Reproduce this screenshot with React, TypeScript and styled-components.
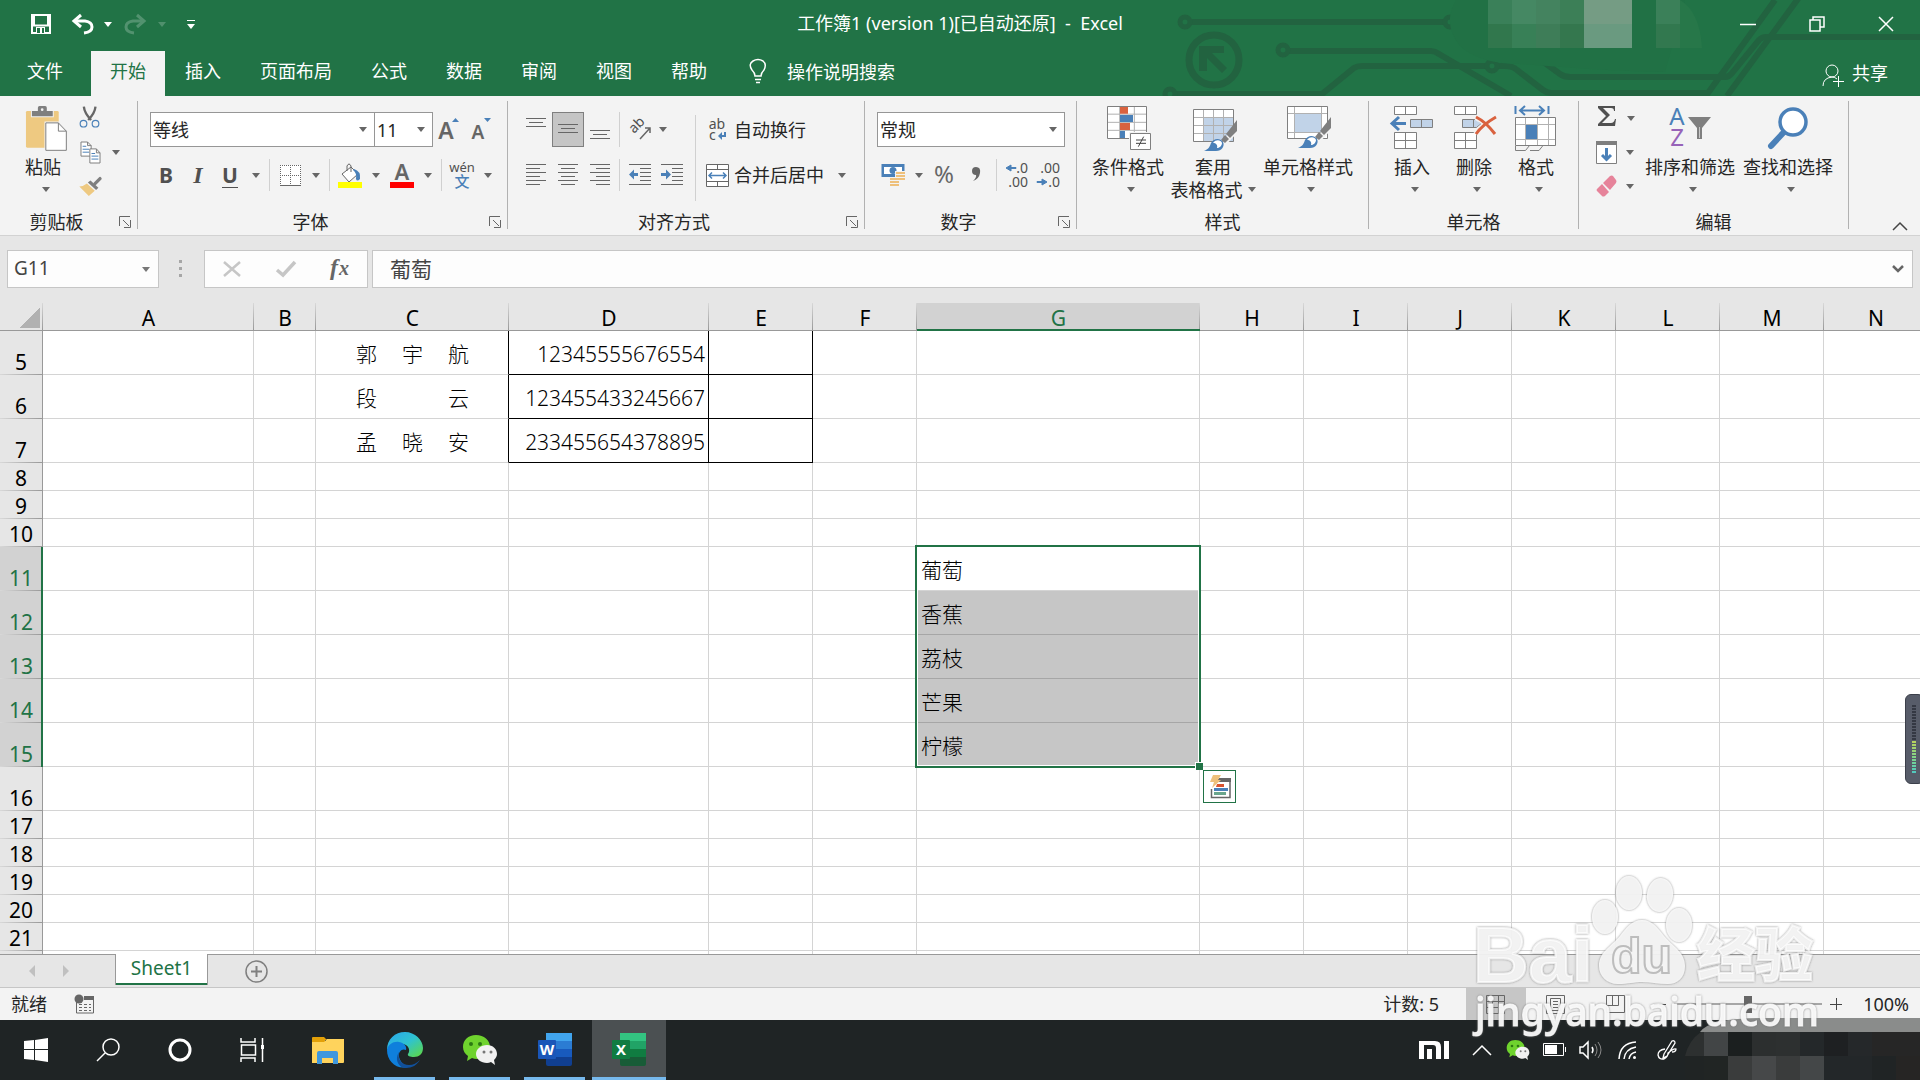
import React from 'react';
import styled, { createGlobalStyle, css } from 'styled-components';

const GREEN = '#217346';
const INK = '#262626';
const GRAY = '#666666';
const BLUE = '#4a80b8';
const UI_FONT = '"Noto Sans", "Noto Sans CJK SC", sans-serif';

const GlobalStyle = createGlobalStyle`
  *, *::before, *::after { box-sizing: border-box; }
  body { margin: 0; overflow: hidden; }
  button, input, select {
    font: inherit;
    color: inherit;
    border: 0;
    padding: 0;
    margin: 0;
    background: none;
    border-radius: 0;
    outline: none;
  }
  svg { display: block; flex: none; overflow: visible; }
`;

/* ---------- shell ---------- */

const Shell = styled.div`
  display: flex;
  flex-direction: column;
  position: relative;
  height: 100vh;
  overflow: hidden;
  font-family: ${UI_FONT};
  font-size: 18px;
  line-height: 22px;
  color: ${INK};
  background: #e6e6e6;
`;

const TopArea = styled.header`
  position: relative;
  flex: none;
  background: ${GREEN};
  color: #fff;
`;

const Circuit = styled.svg`
  position: absolute;
  top: 0;
  right: 0;
  overflow: hidden;
`;

const TitleBar = styled.div`
  position: relative;
  display: grid;
  grid-template-columns: 1fr auto 1fr;
  height: 51px;
`;

const QuickAccess = styled.div`
  display: flex;
  align-items: center;
  padding-left: 20px;
  height: 48px;
`;

const Title = styled.h1`
  margin: 0;
  font-size: 18px;
  font-weight: 400;
  line-height: 47px;
  white-space: pre;
`;

const WindowButtons = styled.div`
  display: flex;
  justify-content: flex-end;
  height: 48px;
`;

const PlainButton = styled.button<{ $w: number; $dim?: boolean }>`
  display: flex;
  align-items: center;
  justify-content: center;
  flex: none;
  width: ${(p) => p.$w}px;
  opacity: ${(p) => (p.$dim ? 0.22 : 1)};
`;

const TabRow = styled.nav`
  position: relative;
  display: flex;
  gap: 1px;
  height: 45px;
`;

const Tab = styled.button<{ $active?: boolean; $wide?: boolean }>`
  height: 45px;
  padding: 0 ${(p) => (p.$wide ? 27 : 19)}px;
  padding-bottom: 5px;
  line-height: 40px;
  ${(p) =>
    p.$active &&
    css`
      background: #f3f3f3;
      color: ${GREEN};
    `}
`;

const TellMe = styled.button`
  display: flex;
  align-items: center;
  gap: 20px;
  height: 45px;
  margin-left: 22px;
  padding-bottom: 4px;
`;

const Share = styled.button`
  display: flex;
  align-items: center;
  gap: 8px;
  height: 45px;
  margin-left: auto;
  padding: 0 32px 2px 0;
`;

/* ---------- ribbon ---------- */

const Ribbon = styled.div`
  display: flex;
  flex: none;
  height: 140px;
  background: #f3f3f3;
  border-bottom: 1px solid #d2d2d2;
`;

const GroupBox = styled.section<{ $w: number }>`
  display: flex;
  flex-direction: column;
  flex: none;
  width: ${(p) => p.$w}px;
  margin-top: 5px;
  padding-right: 1px;
  background: linear-gradient(#b1b1b1, #b1b1b1) right top / 1px 128px no-repeat;
`;

const GroupBody = styled.div`
  display: flex;
  height: 110px;
  padding-left: 12px;
`;

const GroupFoot = styled.div`
  display: flex;
  align-items: center;
  text-align: center;
  height: 22px;
`;

const GroupName = styled.span`
  flex: 1;
`;

const Lines = styled.div`
  display: flex;
  flex-direction: column;
  gap: 12px;
  padding-top: 11px;
`;

const ToolRow = styled.div<{ $tall?: boolean }>`
  display: flex;
  align-items: stretch;
  height: ${(p) => (p.$tall ? 35 : 32)}px;
`;

const Tool = styled.button<{ $w?: number; $on?: boolean }>`
  display: flex;
  align-items: center;
  justify-content: center;
  flex: none;
  width: ${(p) => p.$w ?? 32}px;
  color: #505050;
  ${(p) =>
    p.$on &&
    css`
      background: #c5c5c5;
      box-shadow: inset 0 0 0 1px #7f7f7f;
    `}
`;

const LabelTool = styled.button`
  display: flex;
  align-items: center;
  height: 100%;
  gap: 5px;
  padding-left: 2px;
`;

const Rule = styled.i<{ $w?: number }>`
  flex: none;
  width: 1px;
  margin: 0 ${(p) => p.$w ?? 4}px 0 ${(p) => (p.$w ?? 4) - 1}px;
  background: #d0d0d0;
`;

const TallRule = styled(Rule)`
  margin-top: 14px;
  margin-bottom: 10px;
`;

const Letter = styled.span<{ $kind: 'bold' | 'italic' | 'under' }>`
  font-size: 21px;
  font-weight: 700;
  line-height: 24px;
  ${(p) => p.$kind === 'italic' && 'font-family: "Liberation Serif", serif; font-style: italic; font-size: 24px;'}
  ${(p) => p.$kind === 'under' && 'border-bottom: 1px solid #505050;'}
`;

const Combo = styled.label<{ $w: number; $join?: boolean }>`
  display: flex;
  align-items: center;
  flex: none;
  width: ${(p) => p.$w}px;
  height: 35px;
  padding: 0 7px 0 2px;
  border: 1px solid #969696;
  border-left-width: ${(p) => (p.$join ? 0 : 1)}px;
  background: #fff;
`;

const Select = styled.select`
  appearance: none;
  flex: 1;
  min-width: 0;
  height: 100%;
`;

const Big = styled.button<{ $w: number }>`
  display: flex;
  flex-direction: column;
  align-items: center;
  flex: none;
  width: ${(p) => p.$w}px;
  padding-top: 5px;
  white-space: nowrap;
`;

const BigIcon = styled.span`
  display: flex;
  height: 49px;
`;

const BigLine = styled.span<{ $lone?: boolean }>`
  display: flex;
  align-items: center;
  gap: 5px;
  height: 23px;
  padding-left: ${(p) => (p.$lone ? 5 : 0)}px;
`;

const SmallStack = styled.div<{ $w: number }>`
  display: flex;
  flex-direction: column;
  flex: none;
  width: ${(p) => p.$w}px;
`;

const StackRow = styled.div`
  display: flex;
  height: 34px;
`;

const Collapse = styled.button`
  align-self: flex-end;
  margin: 0 12px 4px auto;
`;

/* ---------- formula bar ---------- */

const FormulaBar = styled.div`
  display: flex;
  align-items: center;
  flex: none;
  height: 67px;
  padding: 0 7px 1px;
`;

const Field = styled.label<{ $grow?: boolean }>`
  display: flex;
  align-items: center;
  height: 38px;
  padding: 0 8px 0 6px;
  border: 1px solid #c6c6c6;
  background: #fdfdfd;
  color: #444;
  ${(p) =>
    p.$grow ? 'flex: 1; margin-left: 4px; padding-left: 17px; font-size: 21px;' : 'flex: none; width: 152px; font-size: 19px;'}
`;

const TextInput = styled.input`
  flex: 1;
  min-width: 0;
  height: 100%;
  padding-bottom: 2px;
`;

const FormulaTools = styled.div`
  display: flex;
  flex: none;
  width: 164px;
  height: 38px;
  border: 1px solid #c6c6c6;
  background: #fdfdfd;
`;

const Grip = styled.svg`
  margin: 0 22px 0 20px;
`;

/* ---------- grid ---------- */

const SheetArea = styled.main`
  position: relative;
  flex: 1;
  min-height: 0;
  overflow: hidden;
  background: #fff;
`;

const Grid = styled.table`
  table-layout: fixed;
  width: 1928px;
  border-collapse: separate;
  border-spacing: 0;
  font-size: 21px;
  font-weight: 300;
  line-height: 24px;
  color: #000;
`;

const ColHead = styled.th<{ $on?: boolean }>`
  height: 28px;
  padding: 2px 0 0;
  font-weight: 400;
  line-height: 22px;
  border-bottom: 1px solid #999;
  background: linear-gradient(#d8d8d8, #999) right / 1px 100% no-repeat #e6e6e6;
  ${(p) =>
    p.$on &&
    css`
      color: ${GREEN};
      background-color: #d2d2d2;
      border-bottom-color: ${GREEN};
      box-shadow: inset 0 -1px ${GREEN};
    `}
`;

const Corner = styled(ColHead)`
  background-image: linear-gradient(to bottom right, transparent 50%, #b1b1b1 50%), linear-gradient(#d8d8d8, #999);
  background-position: 20px 5px, right;
  background-size: 20px 20px, 1px 100%;
`;

const RowHead = styled.th<{ $on?: boolean }>`
  padding: 0 0 1px;
  font-weight: 400;
  vertical-align: bottom;
  border-right: 1px solid #999;
  background: linear-gradient(to right, #d8d8d8, #999) bottom / 100% 1px no-repeat #e6e6e6;
  ${(p) =>
    p.$on &&
    css`
      color: ${GREEN};
      background-color: #d2d2d2;
      border-right-color: ${GREEN};
      box-shadow: inset -1px 0 ${GREEN};
    `}
`;

const Row = styled.tr<{ $h: number }>`
  height: ${(p) => p.$h}px;
`;

const Cell = styled.td<{ $box?: boolean; $edge?: boolean; $fill?: boolean; $anchor?: boolean }>`
  padding: 2px 3px 0 4px;
  border-right: 1px solid ${(p) => (p.$box || p.$edge ? '#000' : '#d4d4d4')};
  border-bottom: 1px solid ${(p) => (p.$box ? '#000' : p.$fill ? '#a6a6a6' : '#d4d4d4')};
  text-align: ${(p) => (p.$box ? 'right' : 'left')};
  background: ${(p) => (p.$fill ? '#c6c6c6' : 'transparent')};
  white-space: nowrap;
  ${(p) => p.$anchor && 'position: relative;'}
`;

const Spread = styled.span`
  display: flex;
  justify-content: space-between;
  padding: 0 36px;
`;

const Outline = styled.div<{ $rows: number }>`
  position: absolute;
  z-index: 2;
  top: -2px;
  left: -2px;
  right: -2px;
  height: ${(p) => p.$rows * 44 + 3}px;
  border: 2px solid ${GREEN};
  box-shadow: inset 0 0 0 1px #fff;
  pointer-events: none;

  &::after {
    content: '';
    position: absolute;
    right: -4px;
    bottom: -4px;
    width: 8px;
    height: 8px;
    background: ${GREEN};
    border: 1px solid #fff;
    border-width: 1px 0 0 1px;
  }
`;

const QuickAnalysis = styled.button`
  position: absolute;
  z-index: 3;
  top: 223px;
  left: 286px;
  display: flex;
  align-items: center;
  justify-content: center;
  width: 33px;
  height: 33px;
  border: 1px solid ${GREEN};
  background: #fff;
`;

const Meter = styled.div`
  position: absolute;
  right: -4px;
  top: 391px;
  width: 19px;
  height: 90px;
  padding: 10px 7px 10px 6px;
  border: 1px solid #3b3f4a;
  border-radius: 6px;
  background: #575c69;
`;

const MeterScale = styled.div`
  height: 100%;
  background: repeating-linear-gradient(to bottom, transparent 0 2px, #575c69 2px 3px),
    linear-gradient(to bottom, #343843 0 52%, #bcd25a 52%, #7fd58a 78%, #4fc9c0 100%);
`;

/* ---------- sheet tabs and status bar ---------- */

const SheetTabs = styled.div`
  display: flex;
  flex: none;
  height: 34px;
  border-top: 1px solid #999;
  border-bottom: 1px solid #c6c6c6;
`;

const SheetNav = styled.div`
  display: flex;
  align-items: center;
  width: 115px;
  padding-left: 15px;
`;

const SheetTab = styled.button`
  height: 31px;
  width: 93px;
  margin-top: -1px;
  padding-bottom: 3px;
  font-size: 19px;
  color: ${GREEN};
  background: #fff;
  border: 1px solid #999;
  border-width: 0 1px;
  box-shadow: inset 0 -2px ${GREEN};
`;

const StatusBar = styled.footer`
  display: flex;
  align-items: center;
  flex: none;
  height: 32px;
  padding: 0 11px;
  background: #f3f3f3;
`;

const Count = styled.span`
  margin: 0 27px 0 auto;
`;

const ViewButton = styled.button<{ $on?: boolean }>`
  display: flex;
  align-items: center;
  justify-content: center;
  width: 60px;
  height: 32px;
  background: ${(p) => (p.$on ? '#c6c6c6' : 'none')};
`;

const Zoom = styled.input`
  appearance: none;
  width: 148px;
  height: 18px;
  background: linear-gradient(#a6a6a6, #a6a6a6) center / 100% 2px no-repeat;

  &::-webkit-slider-thumb {
    appearance: none;
    width: 8px;
    height: 17px;
    background: #666;
  }
`;

const ZoomValue = styled.span`
  width: 50px;
  margin-left: 9px;
  text-align: right;
`;

/* ---------- taskbar ---------- */

const Taskbar = styled.div`
  display: flex;
  flex: none;
  height: 60px;
  background: #1f2425;
  color: #fff;
`;

const TaskButton = styled.button<{ $w: number; $state?: 'open' | 'active' }>`
  display: flex;
  align-items: center;
  justify-content: center;
  flex: none;
  width: ${(p) => p.$w}px;
  height: 60px;
  ${(p) => p.$state === 'open' && 'background: linear-gradient(#76b9ed, #76b9ed) bottom / 61px 3px no-repeat;'}
  ${(p) => p.$state === 'active' && 'background: #4b5052; box-shadow: inset 0 -3px #76b9ed;'}
`;

const Tray = styled.div`
  display: flex;
  align-items: center;
  margin-left: auto;
  padding-right: 232px;
`;

const Mosaic = styled.svg`
  position: absolute;
  right: 0;
  bottom: 0;
  overflow: hidden;
`;

const Watermark = styled.svg`
  position: absolute;
  right: 96px;
  bottom: 30px;
  pointer-events: none;
`;

/* ---------- drawings ---------- */

const Art = ({ w, h, box, children }: { w: number; h: number; box?: string; children: React.ReactNode }) => (
  <svg width={w} height={h} viewBox={box ?? `0 0 ${w} ${h}`} fill="none" aria-hidden="true">
    {children}
  </svg>
);

const Caret = ({ color = GRAY }: { color?: string }) => (
  <Art w={8} h={5}>
    <path d="M0 0h8L4 5z" fill={color} />
  </Art>
);

const CaretTool = ({ w = 20, label }: { w?: number; label: string }) => (
  <Tool $w={w} aria-label={label}>
    <Caret />
  </Tool>
);

const LineSet = ({ lines, h }: { lines: [number, number, number][]; h: number }) => (
  <Art w={20} h={h}>
    {lines.map(([x, y, w]) => (
      <rect key={y} x={x} y={y} width={w} height={1} fill={GRAY} />
    ))}
  </Art>
);

const vertical = (top: number): [number, number, number][] => [
  [0, top, 20],
  [3, top + 4, 14],
  [0, top + 8, 20],
];

const horizontal = (shift: number): [number, number, number][] =>
  [20, 14, 20, 14, 20, 14].map((w, i) => [((20 - w) * shift) / 2, 5 + i * 4, w]);

const IndentIcon = ({ out }: { out?: boolean }) => (
  <Art w={22} h={22}>
    <path d="M0 .5h22M11 4.5h11M11 8.5h11M11 12.5h11M11 16.5h11M0 20.5h22" stroke={GRAY} />
    <path d={out ? 'M0 10.5l5-5v3.500h4v3H5v3.500z' : 'M10 10.500l-5-5v3.500H0v3h5v3.500z'} fill={BLUE} />
  </Art>
);

const BrushOver = () => (
  <>
    <path d="M26 38l18-26v12L32 37z" fill="#f3f3f3" />
    <path d="M44 11v11l-7 7-4-4z" fill="#7f7f7f" />
    <path d="M32 26l4 4-4 4-4-3z" fill="#7f7f7f" />
    <path d="M11 42c5-2 6-5 7-8 3-5 9-5 12-1 2 4-1 9-7 9z" fill={BLUE} />
    <path d="M20 34c3-4 8-3 9 0 0 3-3 5-5 5 1-3-1-5-4-5z" fill="#fff" />
  </>
);

const PasteIcon = () => (
  <Art w={47} h={45} box="60 36 142 136">
    <rect x="78" y="51" width="99" height="111" rx="4" fill="#eec981" />
    <path d="M93 48h69v22H93z" fill="#f3f3f3" />
    <path d="M96 51h18v-10q0-5 5-5h17q5 0 5 5v10h18v16H96z" fill="#7f7f7f" />
    <circle cx="127" cy="47" r="4" fill="#f3f3f3" />
    <path d="M138 87h38l24 25v58h-62z" fill="#fff" stroke="#f3f3f3" strokeWidth="8" />
    <path d="M138 87h38l24 25v58h-62zM176 87v25h24" fill="#fff" stroke="#7f7f7f" strokeWidth="3" />
  </Art>
);

const CutIcon = () => (
  <Art w={21} h={22} box="239 37 62 66">
    <path d="M250 36q2 20 22 40M285 36q-2 20-22 40" stroke={GRAY} strokeWidth="7" />
    <circle cx="249" cy="87" r="10" stroke={BLUE} strokeWidth="3.500" />
    <circle cx="285" cy="87" r="10" stroke={BLUE} strokeWidth="3.500" />
  </Art>
);

const CopyIcon = () => (
  <Art w={21} h={23} box="238 137 64 68">
    <path d="M241 139h20l11 11v32h-31zM261 139v11h11" fill="#fff" stroke="#7f7f7f" strokeWidth="3" />
    <path d="M246 152h11M246 161h20M246 170h20" stroke={BLUE} strokeWidth="3" />
    <path d="M268 160h20l11 12v31h-31zM288 160v12h11" fill="#fff" stroke="#7f7f7f" strokeWidth="3" />
    <path d="M273 174h11M273 182h21M273 191h21" stroke={BLUE} strokeWidth="3" />
  </Art>
);

const PainterIcon = () => (
  <Art w={23} h={21} box="234 245 70 62">
    <path d="M235 276q14-1 23-9l24 22-18 16z" fill="#eec981" />
    <path d="M261 264l8-6 24 22-7 7z" fill="#7f7f7f" />
    <path d="M282 268l16-16" stroke="#7f7f7f" strokeWidth="10" strokeLinecap="round" />
  </Art>
);

const BorderIcon = () => (
  <Art w={21} h={21}>
    <rect width="21" height="21" fill="#fff" />
    <path d="M.5 0v20M20.500 0v20M10.500 0v20M0 .5h21M0 10.500h21" stroke={GRAY} strokeDasharray="1 1" />
    <path d="M0 20.500h21" stroke={GRAY} />
  </Art>
);

const BucketIcon = () => (
  <Art w={24} h={25}>
    <path d="M4 11l9-7 7 7-9 8z" fill="#fff" stroke={GRAY} />
    <path d="M9 8V3q2-4 4 0v6" stroke={GRAY} />
    <path d="M16 6q7 2 6 10-3 3-4 0 1-6-3-9z" fill={BLUE} />
    <rect y="19" width="24" height="6" fill="#ff0" />
  </Art>
);

const FontColorIcon = () => (
  <Art w={24} h={25}>
    <text x="12" y="17" textAnchor="middle" fontSize="22" fontWeight="600" fill={GRAY}>A</text>
    <rect y="19" width="24" height="6" fill="#f00" />
  </Art>
);

const PhoneticIcon = () => (
  <Art w={28} h={28}>
    <text x="14" y="11" textAnchor="middle" fontSize="13" fill="#505050">wén</text>
    <text x="14" y="26" textAnchor="middle" fontSize="15" fontWeight="500" fill={BLUE}>文</text>
  </Art>
);

const SizeIcon = ({ up }: { up?: boolean }) => (
  <Art w={24} h={26}>
    <text x="9" y="22" textAnchor="middle" fontSize={up ? 23 : 19} fontWeight="600" fill={GRAY}>A</text>
    <path d={up ? 'M15 5h7l-3.500-4z' : 'M15 1h7l-3.500 4z'} fill={BLUE} />
  </Art>
);

const OrientIcon = () => (
  <Art w={26} h={22} box="-4 0 26 22">
    <text x="3" y="15" transform="rotate(-45 3 15)" fontSize="14" fill="#505050">ab</text>
    <path d="M9 20L19 9M14 9h5v5" stroke={GRAY} strokeWidth="1.500" />
  </Art>
);

const WrapIcon = () => (
  <Art w={23} h={24}>
    <text x="11" y="11" textAnchor="middle" fontSize="14" fill="#505050">ab</text>
    <text x="3" y="22" fontSize="14" fill="#505050">c</text>
    <path d="M19 14v4h-5" stroke={BLUE} strokeWidth="2" />
    <path d="M16 14l-4 4 4 4z" fill={BLUE} />
  </Art>
);

const MergeIcon = () => (
  <Art w={23} h={23}>
    <path d="M.5.500h22v22H.500zM.500 5.500h22M.500 17.500h22M11.500.500v5M11.500 17.500v5" fill="#fff" stroke={GRAY} />
    <path d="M3 11.500h17M6 8.500l-3 3 3 3M17 8.500l3 3-3 3" stroke={BLUE} strokeWidth="1.500" />
  </Art>
);

const MoneyIcon = () => (
  <Art w={24} h={24}>
    <rect x=".5" y="1" width="23" height="13" fill={BLUE} />
    <path d="M3 4h18v7H3z" fill="#fff" />
    <circle cx="12" cy="7.500" r="3.500" fill={BLUE} />
    <path d="M14 8h10v11h-6v4H8v-8h6z" fill="#f3f3f3" />
    <path d="M15 10h9M15 13h9M15 16h9M9 16h8M9 19h9M9 22h9" stroke="#eec07b" strokeWidth="2" />
  </Art>
);

const DecimalIcon = ({ more }: { more?: boolean }) => (
  <Art w={24} h={26}>
    <text x="23" y="11" textAnchor="end" fontSize="14" fill="#505050">{more ? '.0' : '.00'}</text>
    <text x="23" y="25" textAnchor="end" fontSize="14" fill="#505050">{more ? '.00' : '.0'}</text>
    <path
      d={more ? 'M1 6l5-3v2.500h5v1H6V9z' : 'M10 20l-5-3v2.500H0v1h5V23z'}
      fill={BLUE}
      stroke={BLUE}
    />
  </Art>
);

const ConditionalIcon = () => (
  <Art w={44} h={44} box="141 36 132 132">
    <path d="M145.500 37.500h117v96h-117z" fill="#fff" />
    <path d="M182 37v96M226 37v96M145 60.500h118M145 85h118M145 109h118" stroke="#b1b1b1" strokeWidth="3" />
    <path d="M183 39h24v20h-24zM183 87h30v21h-30z" fill="#d9623f" />
    <path d="M183 63h39v21h-39zM183 111h15v21h-15z" fill={BLUE} />
    <path d="M145.500 37.500h117v96h-117z" stroke="#7f7f7f" strokeWidth="3" />
    <path d="M214.500 118.500h60v48h-60z" fill="#fff" stroke="#f3f3f3" strokeWidth="9" />
    <path d="M214.500 118.500h60v48h-60z" fill="#fff" stroke="#7f7f7f" strokeWidth="3" />
    <path d="M231 138h30M231 148h30M254 128l-16 30" stroke="#444" strokeWidth="3" />
  </Art>
);

const TableStyleIcon = () => (
  <Art w={48} h={45} box="-4 -3 48 45">
    <path d="M.500.500h40v32H.500z" fill="#fff" />
    <path d="M10 8h31v25H10z" fill="#c1d3e8" />
    <path d="M10.500 0v33M20.500 0v33M30.500 0v33M0 8.500h41M0 16.500h41M0 24.500h41" stroke="#b1b1b1" />
    <path d="M.500.500h40v32H.500z" stroke="#7f7f7f" />
    <BrushOver />
  </Art>
);

const CellStyleIcon = () => (
  <Art w={46} h={45} box="-2 0 46 45">
    <path d="M.500.500h40v32H.500z" fill="#fff" />
    <path d="M8 8h26v18H8z" fill="#c1d3e8" />
    <path d="M7.500 0v33M34.500 0v33M0 7.500h41M0 26.500h41" stroke="#b1b1b1" />
    <path d="M.500.500h40v32H.500z" stroke="#7f7f7f" />
    <BrushOver />
  </Art>
);

const InsertIcon = () => (
  <Art w={44} h={44}>
    <path d="M4.500.500h22v8h-22zM15.500.500v8M4.500 26.500h22v16h-22zM15.500 26.500v16M4.500 34.500h22" fill="#fff" stroke="#7f7f7f" />
    <path d="M20.500 13.500h22v8h-22zM31.500 13.500v8" fill="#c1d3e8" stroke="#7f7f7f" />
    <path d="M16 17.500H3M9 11l-7 6.500 7 6.500" stroke={BLUE} strokeWidth="3" />
  </Art>
);

const DeleteIcon = () => (
  <Art w={48} h={44} box="-4 0 48 44">
    <path d="M.500.500h22v8h-22zM11.500.500v8M.500 26.500h22v16h-22zM11.500 26.500v16M.500 34.500h22" fill="#fff" stroke="#7f7f7f" />
    <path d="M8.500 13.500h14l5 4-5 4h-14zM19.500 13.500v8" fill="#c1d3e8" stroke="#7f7f7f" />
    <path d="M22 11q10 5 19 17M42 11Q28 19 22 28" stroke="#f3f3f3" strokeWidth="6" />
    <path d="M22 11q10 5 19 17M42 11Q28 19 22 28" stroke="#d9623f" strokeWidth="3" />
  </Art>
);

const FormatIcon = () => (
  <Art w={42} h={46}>
    <path d="M.500 0v8M33.500 0v8M5 4.500h24M10 0L5 4.500 10 9M24 0l5 4.500L24 9" stroke={BLUE} strokeWidth="2" />
    <path d="M.500 11.500h40v28H.500z" fill="#fff" />
    <path d="M10.500 11v28M22.500 11v28M33.500 11v28M0 18.500h41M0 33.500h41" stroke="#b1b1b1" />
    <path d="M11 19h11v14H11z" fill={BLUE} />
    <path d="M.500 11.500h40v28H.500zM.500 40v4.500h10l4-5M15 44.500h9l4-5" stroke="#7f7f7f" />
  </Art>
);

const SigmaIcon = () => (
  <Art w={20} h={22} box="0 2 20 22">
    <path d="M1 1h17v5h-1q0-3-3-3H6l7 7-8 8h9q3 0 4-4h1l-1 7H1v-2l8-8-8-8z" fill="#505050" />
  </Art>
);

const FillIcon = () => (
  <Art w={22} h={23}>
    <path d="M.500.500h20v22H.500z" fill="#fff" stroke="#7f7f7f" />
    <path d="M0 0h21v4H0z" fill="#7f7f7f" />
    <path d="M10.500 7v11M6 14l4.500 4.500L15 14" stroke={BLUE} strokeWidth="3" />
  </Art>
);

const EraserIcon = () => (
  <Art w={22} h={22}>
    <path d="M7 8l7-7q2-1 3 0l3 4q1 1 0 3l-6 7z" fill="#e6839a" />
    <path d="M6 9l7 8-4 4q-2 1-3 0l-5-5q-1-1 0-2z" fill="#e6839a" />
  </Art>
);

const SortIcon = () => (
  <Art w={44} h={42}>
    <text x="9" y="19" textAnchor="middle" fontSize="24" fill={BLUE}>A</text>
    <text x="9" y="40" textAnchor="middle" fontSize="24" fill="#9763b8">Z</text>
    <path d="M20 11h23L34 22v11h-5V22z" fill="#7f7f7f" />
    <path d="M31.500 21v11" stroke="#c8c8c8" />
  </Art>
);

const FindIcon = () => (
  <Art w={42} h={44}>
    <path d="M17 26L4 40" stroke={BLUE} strokeWidth="6" strokeLinecap="round" />
    <circle cx="26" cy="16" r="13" fill="#fff" stroke={BLUE} strokeWidth="3.500" />
  </Art>
);

const LaunchIcon = () => (
  <Art w={12} h={12}>
    <path d="M.500 10V.500H11M4 4l6 6M11.500 4v7.500H5" stroke={GRAY} />
  </Art>
);

const WeChat = ({ s }: { s: number }) => (
  <Art w={s} h={s} box="0 0 36 36">
    <path d="M14 3C6 3 1 8 1 15c0 4 2 7 5 9l-1 5 5-3q2 1 5 1c8 0 13-5 13-12S22 3 14 3z" fill="#6fd32e" />
    <circle cx="9" cy="12" r="2" fill="#2c7a12" />
    <circle cx="18" cy="12" r="2" fill="#2c7a12" />
    <path d="M25 13c-6 0-11 4-11 9s5 9 11 9q2 0 4-1l4 3-1-5c2-2 3-4 3-6 0-5-4-9-10-9z" fill="#f1f1f1" />
    <circle cx="22" cy="20" r="1.500" fill="#777" />
    <circle cx="29" cy="20" r="1.500" fill="#777" />
  </Art>
);

const OfficeIcon = ({ letter, tones }: { letter: string; tones: string[] }) => (
  <Art w={36} h={34}>
    <path d="M9 0h26v9H9z" fill={tones[0]} />
    <path d="M9 8h26v9H9z" fill={tones[1]} />
    <path d="M9 16h26v9H9z" fill={tones[2]} />
    <path d="M9 24h26v7q0 2-2 2H11q-2 0-2-2z" fill={tones[3]} />
    <rect x="1" y="7" width="18" height="19" rx="1" fill={tones[4]} />
    <text x="10" y="22" textAnchor="middle" fontSize="15" fontWeight="700" fill="#fff">{letter}</text>
  </Art>
);

const CIRCUIT = '#226340';

const CircuitArt = () => (
  <Circuit width="760" height="96" viewBox="1160 0 760 96" fill="none" aria-hidden="true">
    <g stroke={CIRCUIT} strokeWidth="6">
      <path d="M1192 22h251M1289 51h142q4 0 8 3l72 42M1176 94h146l32-26q3-2 8-2h124" />
      <path d="M1497 66h8q8 0 12 4l26 20q4 3 8 3h157l67-93" />
      <path d="M1530 52l30 22q4 3 10 3h155q4 0 7-4l27-33q3-3 7-3h154M1727 96l76-104" />
    </g>
    <g stroke={CIRCUIT} strokeWidth="5">
      <circle cx="1185" cy="22" r="5" />
      <circle cx="1283" cy="50" r="5" />
      <circle cx="1170" cy="94" r="5" />
      <circle cx="1492" cy="66" r="5" fill={GREEN} />
      <circle cx="1450" cy="22" r="5" />
    </g>
    <circle cx="1214" cy="60" r="25" stroke={CIRCUIT} strokeWidth="7" />
    <path d="M1199 46h25v7h-12l15 15-5 5-15-15v13h-8z" fill={CIRCUIT} />
    <path d="M1456 0q-14 24 4 46 20 18 60 18 100 8 145 8l20-72z" fill="#217145" />
    <path d="M1488 0h24v24h-24z" fill="#3a8059" />
    <path d="M1512 0h24v24h-24z" fill="#458863" />
    <path d="M1536 0h24v24h-24z" fill="#44835f" />
    <path d="M1560 0h24v24h-24z" fill="#3c7f57" />
    <path d="M1584 0h48v24h-48z" fill="#759c84" />
    <path d="M1656 0h24v24h-24z" fill="#3b8059" />
    <path d="M1680 0q20 12 22 48h-22z" fill="#277749" />
    <path d="M1488 24h24v24h-24z" fill="#31774d" />
    <path d="M1512 24h24v24h-24z" fill="#388057" />
    <path d="M1536 24h24v24h-24z" fill="#3e7d58" />
    <path d="M1560 24h24v24h-24z" fill="#34774e" />
    <path d="M1584 24h48v24h-48z" fill="#6a9a80" />
    <path d="M1656 24h24v24h-24z" fill="#32784f" />
  </Circuit>
);

const MosaicArt = () => {
  const rows = [
    ['#424546', '#1b1f1f', '#2c2f2f', '#2d3030', '#24282a', '#1e2022', '#25282a', '#262626', '#262626'],
    ['#212524', '#3a3c3c', '#464849', '#3a3c3c', '#444748', '#232729', '#232729', '#202425', '#262524'],
  ];
  return (
    <Mosaic width="236" height="62" viewBox="1684 1018 236 62" aria-hidden="true">
      <path d="M1700 1032q10-14 60-14h160v14z" fill="#8a8c8b" />
      <path d="M1685 1056q4-16 16-24h3v24z" fill="#2d3030" />
      <path d="M1685 1056h19v24h-19z" fill="#202424" />
      {rows.map((row, r) =>
        row.map((fill, c) => (
          <rect key={`${r}-${c}`} x={1704 + c * 24} y={1032 + r * 24} width="24" height="24" fill={fill} />
        )),
      )}
    </Mosaic>
  );
};

const WatermarkArt = () => (
  <Watermark width="352" height="180" viewBox="1472 870 352 180" aria-hidden="true">
    <defs>
      <filter id="soft" x="-10%" y="-10%" width="120%" height="120%">
        <feDropShadow dx="0" dy="0" stdDeviation="1.200" floodColor="#666" floodOpacity=".9" />
      </filter>
    </defs>
    <g fill="#fff" fillOpacity=".82" filter="url(#soft)">
      <ellipse cx="1605" cy="917" rx="13" ry="17" />
      <ellipse cx="1629" cy="893" rx="13" ry="17" />
      <ellipse cx="1660" cy="895" rx="13" ry="17" transform="rotate(8 1660 895)" />
      <ellipse cx="1679" cy="925" rx="13" ry="17" />
      <path d="M1642 920c10 0 16 8 22 16 8 10 21 16 21 30 0 12-8 18-17 18-10 0-18-2-26-2s-14 2-24 2c-11 0-19-8-19-18 0-14 12-19 21-30 6-8 12-16 22-16z" />
    </g>
    <g
      fill="#fff"
      fillOpacity=".82"
      stroke="#fff"
      strokeOpacity=".7"
      strokeWidth="2"
      filter="url(#soft)"
      fontFamily='"Liberation Sans", sans-serif'
      fontWeight="700"
    >
      <text x="1473" y="982" fontSize="77">Bai</text>
      <text x="1697" y="976" fontSize="58" fontFamily='"Noto Sans CJK SC", sans-serif' fontWeight="900">经验</text>
    </g>
    <text x="1611" y="973" fontSize="50" fontWeight="700" fontFamily='"Liberation Sans", sans-serif' fill="#f4f4f4" stroke="#bdbdbd" strokeWidth="2">du</text>
    <text
      x="1475"
      y="1026"
      fontSize="39"
      fontFamily='"Noto Sans", sans-serif'
      fontWeight="500"
      fill="#fff"
      fillOpacity=".88"
      stroke="#fff"
      strokeOpacity=".7"
      filter="url(#soft)"
    >
      jingyan.baidu.com
    </text>
  </Watermark>
);

/* ---------- composed parts ---------- */

const Group = ({ name, w, launcher, children }: { name: string; w: number; launcher?: boolean; children: React.ReactNode }) => (
  <GroupBox $w={w} aria-label={name}>
    <GroupBody>{children}</GroupBody>
    <GroupFoot>
      <GroupName>{name}</GroupName>
      {launcher && (
        <Tool $w={24} aria-label={`${name}设置`}>
          <LaunchIcon />
        </Tool>
      )}
    </GroupFoot>
  </GroupBox>
);

const BigTool = ({ w, icon, label, second }: { w: number; icon: React.ReactNode; label: string; second?: string }) => (
  <Big $w={w}>
    <BigIcon>{icon}</BigIcon>
    <BigLine>{label}</BigLine>
    <BigLine $lone={!second}>
      {second}
      <Caret />
    </BigLine>
  </Big>
);

const COLUMNS: [string, number][] = [
  ['A', 211], ['B', 62], ['C', 193], ['D', 200], ['E', 104], ['F', 104], ['G', 283],
  ['H', 104], ['I', 104], ['J', 104], ['K', 104], ['L', 104], ['M', 104], ['N', 104],
];

const ROWS: [number, number][] = [
  [5, 44], [6, 44], [7, 44], [8, 28], [9, 28], [10, 28], [11, 44], [12, 44], [13, 44],
  [14, 44], [15, 44], [16, 44], [17, 28], [18, 28], [19, 28], [20, 28], [21, 28],
];

const NAMES: Record<number, string[]> = { 5: ['郭', '宇', '航'], 6: ['段', '云'], 7: ['孟', '晓', '安'] };
const NUMBERS: Record<number, string> = { 5: '12345555676554', 6: '123455433245667', 7: '233455654378895' };
const FRUIT: Record<number, string> = { 11: '葡萄', 12: '香蕉', 13: '荔枝', 14: '芒果', 15: '柠檬' };

const GridCell = ({ col, row }: { col: string; row: number }) => {
  if (col === 'C' && NAMES[row]) {
    return (
      <Cell $edge>
        <Spread>
          {NAMES[row].map((ch) => (
            <span key={ch}>{ch}</span>
          ))}
        </Spread>
      </Cell>
    );
  }
  if ((col === 'D' || col === 'E') && NUMBERS[row]) {
    return <Cell $box>{col === 'D' ? NUMBERS[row] : null}</Cell>;
  }
  if (col === 'G' && FRUIT[row]) {
    return (
      <Cell $fill={row > 11} $anchor={row === 11}>
        {FRUIT[row]}
        {row === 11 && (
          <>
            <Outline $rows={5} />
            <QuickAnalysis aria-label="快速分析">
              <Art w={22} h={24}>
                <path d="M9 4.500h12v18H2.500V14" stroke={GRAY} strokeWidth="1.500" />
                <path d="M10 3h12v4H10z" fill={GRAY} />
                <path d="M4 0h8L9 5h3L3 13l2-6H1z" fill="#eec07b" />
                <path d="M8 9h7v3H7z" fill="#d9532f" />
                <path d="M5 13h14v3H5z" fill={BLUE} />
                <path d="M5 17h12v3H5z" fill="#6aa58c" />
              </Art>
            </QuickAnalysis>
          </>
        )}
      </Cell>
    );
  }
  return <Cell />;
};

export default function App() {
  return (
    <Shell>
      <GlobalStyle />
      <TopArea>
        <CircuitArt />
        <TitleBar>
          <QuickAccess>
            <PlainButton $w={42} aria-label="保存">
              <Art w={20} h={20}>
                <path d="M1 1h18v18H1zM3 11V1M17 11V1M2 11.500h16" stroke="#fff" strokeWidth="2" />
                <path d="M5 13h9v7H5z" fill="#fff" />
                <path d="M6 14h3v5H6zM11 14h2v5h-2z" fill={GREEN} />
              </Art>
            </PlainButton>
            <PlainButton $w={42} aria-label="撤消">
              <Art w={24} h={20}>
                <path d="M3 7h11q7 1 7 6t-8 6" stroke="#fff" strokeWidth="3" />
                <path d="M10 1L3 7l7 6" stroke="#fff" strokeWidth="3" />
              </Art>
            </PlainButton>
            <Caret color="#fff" />
            <PlainButton $w={46} $dim aria-label="恢复">
              <Art w={24} h={20}>
                <path d="M21 7H10q-7 1-7 6t8 6" stroke="#fff" strokeWidth="3" />
                <path d="M14 1l7 6-7 6" stroke="#fff" strokeWidth="3" />
              </Art>
            </PlainButton>
            <Caret color="#50906d" />
            <PlainButton $w={50} aria-label="自定义快速访问工具栏">
              <Art w={8} h={9}>
                <path d="M0 .500h8" stroke="#fff" strokeWidth="1" />
                <path d="M0 4h8L4 9z" fill="#fff" />
              </Art>
            </PlainButton>
          </QuickAccess>
          <Title>工作簿1 (version 1)[已自动还原]  -  Excel</Title>
          <WindowButtons>
            <PlainButton $w={69} aria-label="最小化">
              <Art w={16} h={16}><path d="M0 8.500h16" stroke="#fff" strokeWidth="1.500" /></Art>
            </PlainButton>
            <PlainButton $w={69} aria-label="还原">
              <Art w={16} h={16}><path d="M1 4h10v11H1zM4 4V1h11v10h-4" stroke="#fff" strokeWidth="1.500" /></Art>
            </PlainButton>
            <PlainButton $w={69} aria-label="关闭">
              <Art w={16} h={16}><path d="M1 1l14 14M15 1L1 15" stroke="#fff" strokeWidth="1.500" /></Art>
            </PlainButton>
          </WindowButtons>
        </TitleBar>
        <TabRow>
          <Tab $wide>文件</Tab>
          <Tab $active>开始</Tab>
          {['插入', '页面布局', '公式', '数据', '审阅', '视图', '帮助'].map((t) => (
            <Tab key={t}>{t}</Tab>
          ))}
          <TellMe>
            <Art w={18} h={25}>
              <path d="M6 17q0-3-3-6-4-6 1-9 5-3 10 0 4 3 1 9-3 3-3 6zM6 20.500h6M7 23.500h4" stroke="#fff" strokeWidth="1.500" />
            </Art>
            操作说明搜索
          </TellMe>
          <Share>
            <Art w={22} h={28} box="0 -5 22 28">
              <circle cx="10" cy="7" r="6" stroke="#fff" />
              <path d="M1 22q0-8 9-9 3 0 5 2M16.500 12v11M11 17.500h11" stroke="#fff" />
            </Art>
            共享
          </Share>
        </TabRow>
      </TopArea>

      <Ribbon>
        <Group name="剪贴板" w={138} launcher>
          <BigTool w={62} icon={<PasteIcon />} label="粘贴" />
          <SmallStack $w={52}>
            <StackRow><Tool aria-label="剪切"><CutIcon /></Tool></StackRow>
            <StackRow><Tool aria-label="复制"><CopyIcon /></Tool><CaretTool label="复制选项" /></StackRow>
            <StackRow><Tool aria-label="格式刷"><PainterIcon /></Tool></StackRow>
          </SmallStack>
        </Group>

        <Group name="字体" w={370} launcher>
          <Lines>
            <ToolRow $tall>
              <Combo $w={225}>
                <Select aria-label="字体"><option>等线</option></Select>
                <Caret />
              </Combo>
              <Combo $w={58} $join>
                <Select aria-label="字号"><option>11</option></Select>
                <Caret />
              </Combo>
              <Tool aria-label="增大字号"><SizeIcon up /></Tool>
              <Tool aria-label="减小字号"><SizeIcon /></Tool>
            </ToolRow>
            <ToolRow>
              <Tool><Letter $kind="bold">B</Letter></Tool>
              <Tool><Letter $kind="italic">I</Letter></Tool>
              <Tool><Letter $kind="under">U</Letter></Tool>
              <CaretTool label="下划线" />
              <Rule />
              <Tool aria-label="边框"><BorderIcon /></Tool>
              <CaretTool label="边框选项" />
              <Rule />
              <Tool aria-label="填充颜色"><BucketIcon /></Tool>
              <CaretTool label="填充颜色选项" />
              <Tool aria-label="字体颜色"><FontColorIcon /></Tool>
              <CaretTool label="字体颜色选项" />
              <Rule />
              <Tool aria-label="拼音"><PhoneticIcon /></Tool>
              <CaretTool label="拼音选项" />
            </ToolRow>
          </Lines>
        </Group>

        <Group name="对齐方式" w={357} launcher>
          <Lines>
            <ToolRow $tall>
              <Tool aria-label="顶端对齐"><LineSet h={35} lines={vertical(6)} /></Tool>
              <Tool $on aria-label="垂直居中"><LineSet h={35} lines={vertical(12)} /></Tool>
              <Tool aria-label="底端对齐"><LineSet h={35} lines={vertical(18)} /></Tool>
              <Rule />
              <Tool aria-label="方向"><OrientIcon /></Tool>
              <CaretTool w={14} label="方向选项" />
            </ToolRow>
            <ToolRow>
              <Tool aria-label="左对齐"><LineSet h={32} lines={horizontal(0)} /></Tool>
              <Tool aria-label="居中"><LineSet h={32} lines={horizontal(1)} /></Tool>
              <Tool aria-label="右对齐"><LineSet h={32} lines={horizontal(2)} /></Tool>
              <Rule />
              <Tool aria-label="减少缩进量"><IndentIcon out /></Tool>
              <Tool aria-label="增加缩进量"><IndentIcon /></Tool>
            </ToolRow>
          </Lines>
          <TallRule $w={8} />
          <Lines>
            <ToolRow $tall>
              <LabelTool><WrapIcon />自动换行</LabelTool>
            </ToolRow>
            <ToolRow>
              <LabelTool><MergeIcon />合并后居中</LabelTool>
              <CaretTool w={36} label="合并选项" />
            </ToolRow>
          </Lines>
        </Group>

        <Group name="数字" w={212} launcher>
          <Lines>
            <ToolRow $tall>
              <Combo $w={188}>
                <Select aria-label="数字格式"><option>常规</option></Select>
                <Caret />
              </Combo>
            </ToolRow>
            <ToolRow>
              <Tool aria-label="会计数字格式"><MoneyIcon /></Tool>
              <CaretTool label="会计数字格式选项" />
              <Tool aria-label="百分比样式">
                <Art w={24} h={24}><text x="11" y="20" textAnchor="middle" fontSize="24" fill={GRAY}>%</text></Art>
              </Tool>
              <Tool aria-label="千位分隔样式">
                <Art w={10} h={20}><path d="M0 6q0-4 4-4 5 0 4 6-1 6-7 8 4-4 3-6-4 0-4-4z" fill={GRAY} /></Art>
              </Tool>
              <Rule />
              <Tool aria-label="增加小数位数"><DecimalIcon more /></Tool>
              <Tool aria-label="减少小数位数"><DecimalIcon /></Tool>
            </ToolRow>
          </Lines>
        </Group>

        <Group name="样式" w={292}>
          <BigTool w={78} icon={<ConditionalIcon />} label="条件格式" />
          <BigTool w={92} icon={<TableStyleIcon />} label="套用" second="表格格式" />
          <BigTool w={98} icon={<CellStyleIcon />} label="单元格样式" />
        </Group>

        <Group name="单元格" w={210}>
          <BigTool w={62} icon={<InsertIcon />} label="插入" />
          <BigTool w={62} icon={<DeleteIcon />} label="删除" />
          <BigTool w={62} icon={<FormatIcon />} label="格式" />
        </Group>

        <Group name="编辑" w={270}>
          <SmallStack $w={50}>
            <StackRow><Tool aria-label="自动求和"><SigmaIcon /></Tool><CaretTool w={16} label="求和选项" /></StackRow>
            <StackRow><Tool aria-label="填充"><FillIcon /></Tool><CaretTool w={14} label="填充选项" /></StackRow>
            <StackRow><Tool aria-label="清除"><EraserIcon /></Tool><CaretTool w={14} label="清除选项" /></StackRow>
          </SmallStack>
          <BigTool w={98} icon={<SortIcon />} label="排序和筛选" />
          <BigTool w={98} icon={<FindIcon />} label="查找和选择" />
        </Group>

        <Collapse aria-label="折叠功能区">
          <Art w={16} h={10}><path d="M1 9l7-7 7 7" stroke="#444" strokeWidth="1.500" /></Art>
        </Collapse>
      </Ribbon>

      <FormulaBar>
        <Field>
          <TextInput aria-label="名称框" defaultValue="G11" />
          <Caret color="#777" />
        </Field>
        <Grip width="3" height="18" aria-hidden="true">
          <path d="M0 0h3v3H0zM0 7h3v3H0zM0 14h3v3H0z" fill="#a6a6a6" />
        </Grip>
        <FormulaTools>
          <PlainButton $w={54} aria-label="取消">
            <Art w={18} h={16}><path d="M1 1l16 14M17 1L1 15" stroke="#c6c6c6" strokeWidth="2.500" /></Art>
          </PlainButton>
          <PlainButton $w={54} aria-label="输入">
            <Art w={20} h={16}><path d="M1 9l6 5L19 1" stroke="#c6c6c6" strokeWidth="3.500" /></Art>
          </PlainButton>
          <PlainButton $w={54} aria-label="插入函数">
            <Art w={22} h={26}>
              <text x="1" y="19" fontSize="24" fontStyle="italic" fontWeight="700" fill={GRAY} fontFamily='"Liberation Serif", serif'>f</text>
              <text x="10" y="19" fontSize="20" fontStyle="italic" fontWeight="700" fill={GRAY} fontFamily='"Liberation Serif", serif'>x</text>
            </Art>
          </PlainButton>
        </FormulaTools>
        <Field $grow>
          <TextInput aria-label="编辑栏" defaultValue="葡萄" />
          <Art w={12} h={8}><path d="M1 1l5 5 5-5" stroke={GRAY} strokeWidth="2.500" /></Art>
        </Field>
      </FormulaBar>

      <SheetArea>
        <Grid>
          <colgroup>
            <col width={43} />
            {COLUMNS.map(([name, w]) => <col key={name} width={w} />)}
          </colgroup>
          <thead>
            <tr>
              <Corner aria-label="全选" />
              {COLUMNS.map(([name]) => <ColHead key={name} scope="col" $on={name === 'G'}>{name}</ColHead>)}
            </tr>
          </thead>
          <tbody>
            {ROWS.map(([row, h]) => (
              <Row key={row} $h={h}>
                <RowHead scope="row" $on={row >= 11 && row <= 15}>{row}</RowHead>
                {COLUMNS.map(([name]) => <GridCell key={name} col={name} row={row} />)}
              </Row>
            ))}
            <Row $h={28}>
              <RowHead />
              {COLUMNS.map(([name]) => <Cell key={name} />)}
            </Row>
          </tbody>
        </Grid>
        <Meter><MeterScale /></Meter>
      </SheetArea>

      <SheetTabs>
        <SheetNav>
          <PlainButton $w={34} aria-label="上一张"><Art w={6} h={12}><path d="M6 0v12L0 6z" fill="#c0c0c0" /></Art></PlainButton>
          <PlainButton $w={34} aria-label="下一张"><Art w={6} h={12}><path d="M0 0v12l6-6z" fill="#c0c0c0" /></Art></PlainButton>
        </SheetNav>
        <SheetTab>Sheet1</SheetTab>
        <PlainButton $w={97} aria-label="新工作表">
          <Art w={23} h={23}>
            <circle cx="11.500" cy="11.500" r="10.500" stroke="#7f7f7f" strokeWidth="1.500" />
            <path d="M11.500 6v11M6 11.500h11" stroke="#7f7f7f" strokeWidth="2" />
          </Art>
        </PlainButton>
      </SheetTabs>

      <StatusBar>
        就绪
        <PlainButton $w={74} aria-label="录制宏">
          <Art w={21} h={20}>
            <path d="M2.500 8v11h17V3" stroke={GRAY} />
            <circle cx="5" cy="5" r="4.500" fill={GRAY} />
            <path d="M10 2h10v4H10z" fill={GRAY} />
            <path d="M5 10.500h12M5 13.500h12M5 16.500h12" stroke={GRAY} strokeDasharray="3 2" />
          </Art>
        </PlainButton>
        <Count>计数: 5</Count>
        <ViewButton $on aria-label="普通">
          <Art w={20} h={19}><path d="M.500.500h18v18H.500zM6.500.500v18M12.500.500v18M.500 6.500h18M.500 12.500h18" stroke={GRAY} /></Art>
        </ViewButton>
        <ViewButton aria-label="页面布局">
          <Art w={20} h={19}><path d="M.500.500h18v18H.500zM4.500 3.500h10v12h-10zM7 6.500h5M7 9.500h5M7 12.500h5" stroke={GRAY} /></Art>
        </ViewButton>
        <ViewButton aria-label="分页预览">
          <Art w={20} h={19}><path d="M.500.500h18v17H.500zM6.500.500v10M12.500.500v10M.500 10.500h12" stroke={GRAY} /></Art>
        </ViewButton>
        <PlainButton $w={28} aria-label="缩小"><Art w={12} h={12}><path d="M0 6.500h12" stroke="#444" /></Art></PlainButton>
        <Zoom type="range" aria-label="缩放" min={10} max={190} defaultValue={100} />
        <PlainButton $w={28} aria-label="放大"><Art w={12} h={12}><path d="M0 6.500h12M6.500 0v12" stroke="#444" /></Art></PlainButton>
        <ZoomValue>100%</ZoomValue>
      </StatusBar>

      <Taskbar>
        <TaskButton $w={72} aria-label="开始">
          <Art w={24} h={24}><path d="M0 3l10-1v9H0zM11 2l13-2v11H11zM0 12h10v10L0 21zM11 12h13v12l-13-2z" fill="#fff" /></Art>
        </TaskButton>
        <TaskButton $w={72} aria-label="搜索">
          <Art w={24} h={24}><circle cx="15" cy="9" r="8" stroke="#fff" strokeWidth="1.500" /><path d="M9 15l-8 8" stroke="#fff" strokeWidth="1.500" /></Art>
        </TaskButton>
        <TaskButton $w={72} aria-label="小娜">
          <Art w={24} h={24}><circle cx="12" cy="12" r="10" stroke="#fff" strokeWidth="3" /></Art>
        </TaskButton>
        <TaskButton $w={72} aria-label="任务视图">
          <Art w={24} h={24}><path d="M1 0v4h14V0M1.500 7h14v10h-14zM1 24v-4h14v4M22.500 0v24" stroke="#fff" strokeWidth="1.500" /><path d="M21 7h3v4h-3z" fill="#fff" /></Art>
        </TaskButton>
        <TaskButton $w={79} aria-label="文件资源管理器">
          <Art w={32} h={28}>
            <path d="M0 2q0-1 1-1h11l3 3h-2v4H0z" fill="#e3a008" />
            <path d="M0 6h12l3-3h17v23q0 1-1 1H0z" fill="#ffd35c" />
            <path d="M5 28V17q0-2 2-2h17q2 0 2 2v11h-5v-6H10v6z" fill="#3f97dd" />
          </Art>
        </TaskButton>
        <TaskButton $w={75} $state="open" aria-label="浏览器">
          <Art w={36} h={36}>
            <defs>
              <linearGradient id="edgeTop" x1="0" y1="0" x2="1" y2="1"><stop offset="0" stopColor="#2aa5ee" /><stop offset=".5" stopColor="#2fc3cf" /><stop offset="1" stopColor="#61d93c" /></linearGradient>
            </defs>
            <path d="M0 18C0 7 8 0 18 0s18 8 18 16c0 6-4 9-9 9-4 0-7-1-6-3 3-4 0-10-6-10C8 12 4 14 0 18z" fill="url(#edgeTop)" />
            <path d="M0 18c1-6 7-9 12-8 6 1 8 5 7 8-4-2-8 2-7 7 1 4 4 8 9 10C9 38 0 29 0 18z" fill="#0f7fdc" />
            <path d="M12 20c-2 7 3 13 10 13 4 0 8-2 11-5-3 5-8 8-14 8-7 0-12-8-7-16z" fill="#11509a" />
          </Art>
        </TaskButton>
        <TaskButton $w={75} $state="open" aria-label="微信"><WeChat s={36} /></TaskButton>
        <TaskButton $w={75} $state="open" aria-label="Word">
          <OfficeIcon letter="W" tones={['#41a5ee', '#2b7cd3', '#185abd', '#103f91', '#1a56b8']} />
        </TaskButton>
        <TaskButton $w={74} $state="active" aria-label="Excel">
          <OfficeIcon letter="X" tones={['#33c481', '#21a366', '#107c41', '#185c37', '#107c41']} />
        </TaskButton>
        <Tray>
          <PlainButton $w={60} aria-label="小米">
            <Art w={30} h={18}><path d="M0 0h16q6 0 6 6v12h-5V7q0-3-3-3H5v14H0zM8 8h5v10H8zM25 0h5v18h-5z" fill="#fff" /></Art>
          </PlainButton>
          <PlainButton $w={36} aria-label="显示隐藏的图标"><Art w={18} h={10}><path d="M0 10l9-9 9 9" stroke="#fff" strokeWidth="1.500" /></Art></PlainButton>
          <PlainButton $w={36} aria-label="微信通知"><WeChat s={24} /></PlainButton>
          <PlainButton $w={36} aria-label="电池"><Art w={23} h={14}><path d="M.500.500h20v12H.500zM22.500 4v5" stroke="#fff" /><path d="M2 2h12v9H2z" fill="#fff" /></Art></PlainButton>
          <PlainButton $w={36} aria-label="音量"><Art w={23} h={18}><path d="M1 6h3l5-5v16l-5-5H1zM13 6q2 3 0 6" stroke="#fff" strokeWidth="1.500" /><path d="M16 3q4 6 0 12M19 1q6 8 0 16" stroke="#888" /></Art></PlainButton>
          <PlainButton $w={38} aria-label="网络"><Art w={19} h={19}><path d="M1 18Q2 2 18 1M6 18Q7 8 18 6M11 18q1-6 7-7" stroke="#fff" strokeWidth="1.500" /><circle cx="16.500" cy="16.500" r="1.500" fill="#fff" /></Art></PlainButton>
          <PlainButton $w={42} aria-label="手写工作区"><Art w={20} h={20}><path d="M7 14L15 1q3-1 3 2L10 16l-4 2zM8 9q-7 1-7 6 1 5 6 4 4-2 4-6 6-5 8-4 0 3-4 3" stroke="#fff" strokeWidth="1.300" /></Art></PlainButton>
        </Tray>
      </Taskbar>

      <MosaicArt />
      <WatermarkArt />
    </Shell>
  );
}
